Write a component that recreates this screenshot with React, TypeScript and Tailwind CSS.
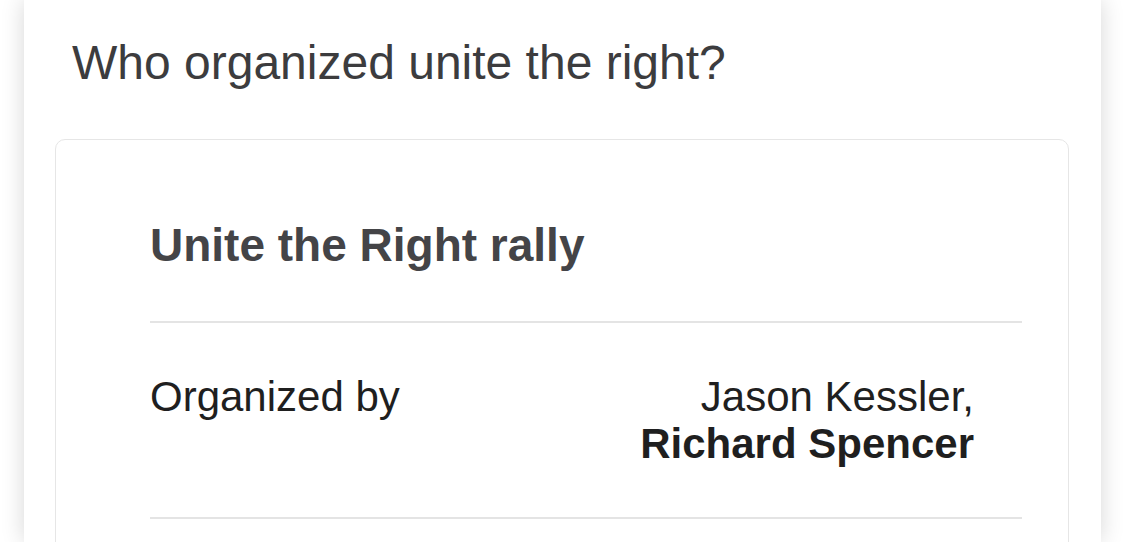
export default function App() {
  return (
    <div className="h-[542px] w-[1125px] overflow-hidden bg-white font-['Liberation_Sans',Arial,sans-serif]">
      <div className="ml-[24px] h-full w-[1077px] bg-white shadow-[0_0_22px_rgba(0,0,0,0.16)]">
        <h1 className="pl-[48px] pt-[35px] text-[48px] leading-[56px] font-normal text-[#3c3c3e]">
          Who organized unite the right?
        </h1>

        <div className="mt-[48px] ml-[31px] mr-[32px] h-[500px] rounded-[10px] border border-[#e6e6e6] pl-[94px] pr-[46px] pt-[78px]">
          <h2 className="pb-[49px] text-[46px] leading-[54px] font-bold text-[#444447]">Unite the Right rally</h2>

          <div className="border-t-2 border-[#e4e4e4]" />

          <div className="flex justify-between py-[50px] pr-[48px] text-[42px] leading-[47px] text-[#1f1f1f]">
            <span>Organized by</span>
            <div className="text-right">
              <div>Jason Kessler,</div>
              <div className="font-bold">Richard Spencer</div>
            </div>
          </div>

          <div className="border-t-2 border-[#e4e4e4]" />
        </div>
      </div>
    </div>
  );
}
